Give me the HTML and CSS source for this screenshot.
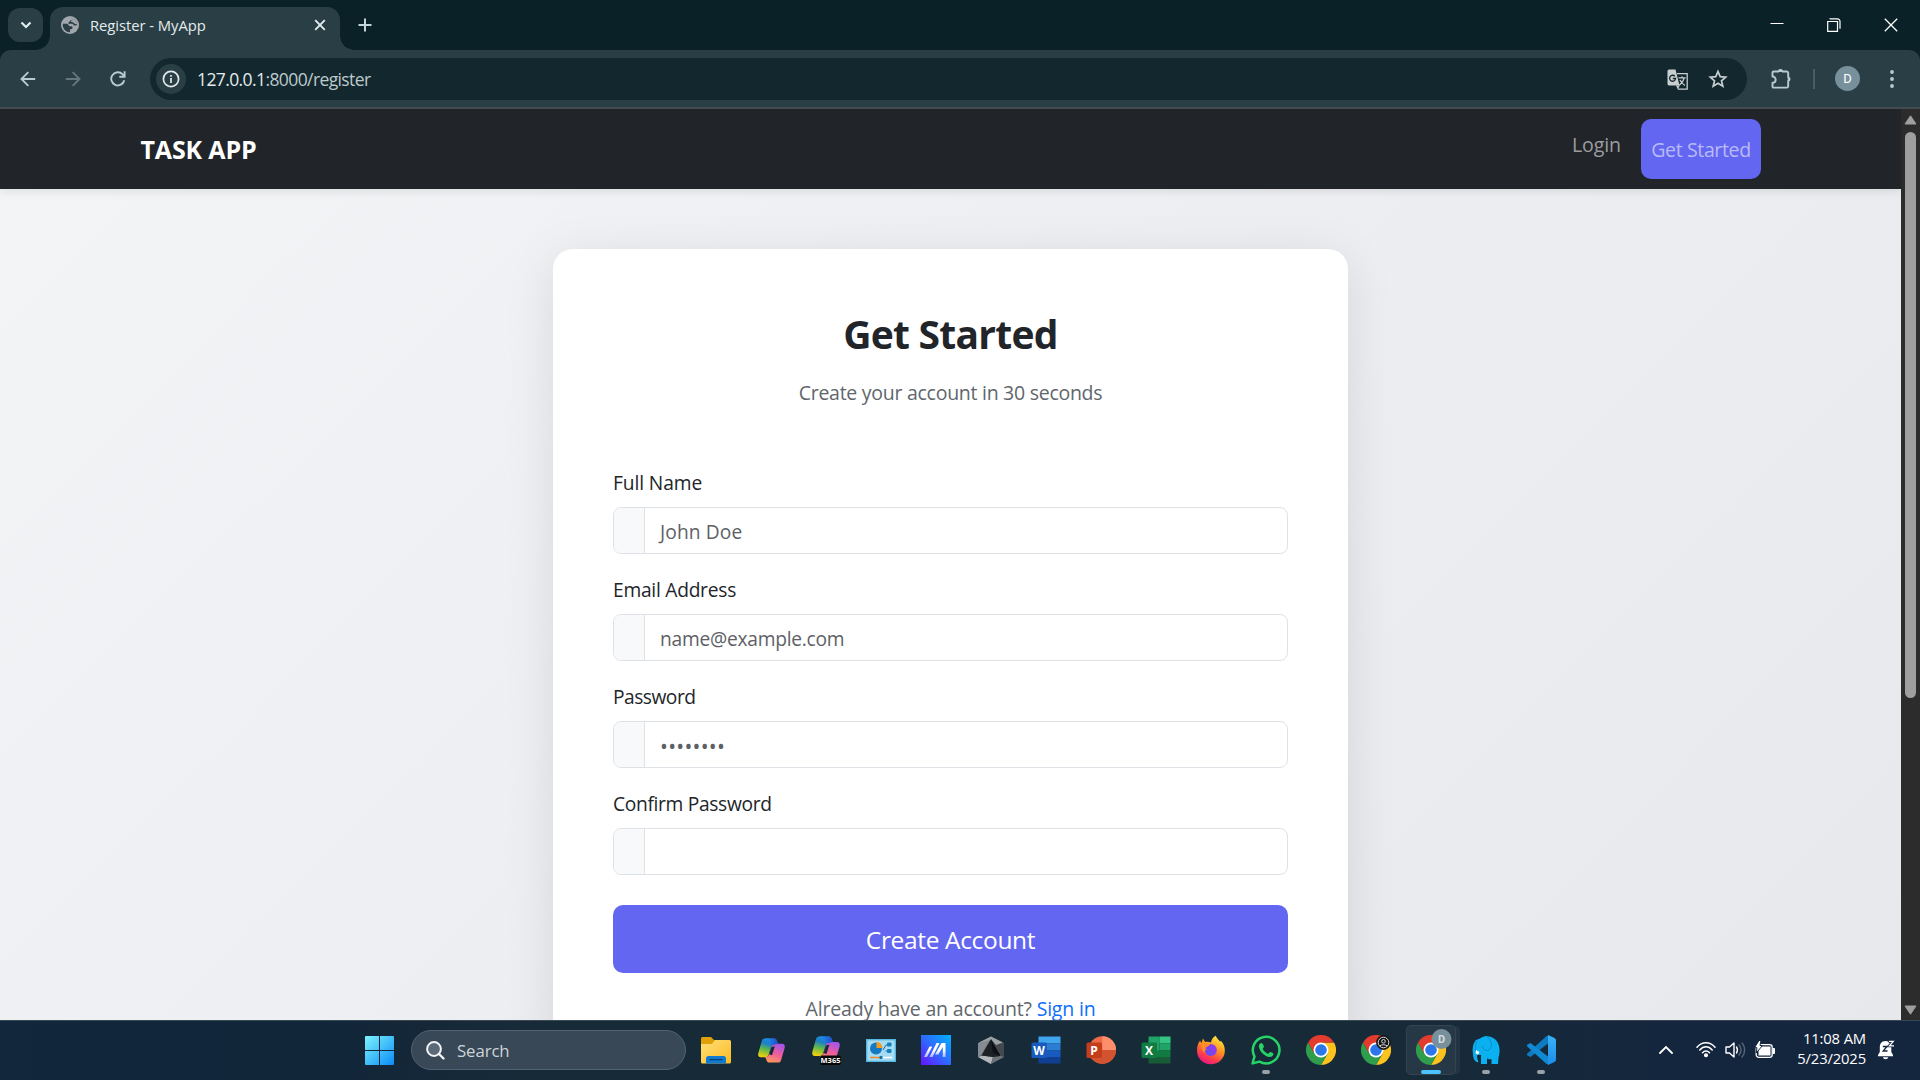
FILE: index.html
```html
<!DOCTYPE html>
<html lang="en">
<head>
<meta charset="utf-8">
<title>Register - MyApp</title>
<link rel="stylesheet" href="styles.css">
</head>
<body>
<svg class="defs" width="0" height="0">
  <defs>
    <linearGradient id="win" x1="0" y1="0" x2="1" y2="1"><stop offset="0" stop-color="#7df3ff"/><stop offset="1" stop-color="#0a8cf5"/></linearGradient>
    <linearGradient id="folder" x1="0" y1="0" x2="1" y2="1"><stop offset="0" stop-color="#ffe07a"/><stop offset="1" stop-color="#fdba22"/></linearGradient>
    <linearGradient id="copA" x1="0.6" y1="0" x2="0.3" y2="1"><stop offset="0" stop-color="#1b8fe8"/><stop offset=".3" stop-color="#1c7fc4"/><stop offset=".6" stop-color="#5fb94c"/><stop offset="1" stop-color="#f2d10e"/></linearGradient>
    <linearGradient id="copB" x1="0.7" y1="0" x2="0.3" y2="1"><stop offset="0" stop-color="#a355ea"/><stop offset=".5" stop-color="#ee5c9c"/><stop offset="1" stop-color="#ff9a5a"/></linearGradient>
    <linearGradient id="copC" x1="0" y1="0" x2="1" y2="0"><stop offset="0" stop-color="#1f9bf0"/><stop offset="1" stop-color="#2247c9"/></linearGradient>
    <linearGradient id="ma" x1="0" y1="1" x2="1" y2="0"><stop offset="0" stop-color="#6a11ff"/><stop offset=".5" stop-color="#2c6bff"/><stop offset="1" stop-color="#00b2ff"/></linearGradient>
    <linearGradient id="maGlyph" x1="0" y1="1" x2="0" y2="0"><stop offset="0" stop-color="#a9b8ff"/><stop offset=".5" stop-color="#fff"/><stop offset="1" stop-color="#fff"/></linearGradient>
    <linearGradient id="fox" x1=".8" y1="0" x2=".3" y2="1"><stop offset="0" stop-color="#fff04a"/><stop offset=".4" stop-color="#ff9a1f"/><stop offset=".75" stop-color="#ff3d4a"/><stop offset="1" stop-color="#e3128d"/></linearGradient>
    <linearGradient id="foxIn" x1="1" y1="0" x2="0" y2="1"><stop offset="0" stop-color="#a431ea"/><stop offset="1" stop-color="#5a52f0"/></linearGradient>
    <linearGradient id="code" x1="0" y1="0" x2="0" y2="1"><stop offset="0" stop-color="#3db1f6"/><stop offset="1" stop-color="#1a8de8"/></linearGradient>
    <symbol id="copilot" viewBox="0 0 30 30">
      <path d="M8 2.500H17.500C19.500 2.500 20.500 4 21 6L22 9H18C16 9 15 10.500 14.500 12L12 19.500C11.500 21 10.500 22 9 22H4C1.500 22 .8 20 1.400 17.500L5 5C5.500 3.500 6.500 2.500 8 2.500Z" fill="url(#copA)"/>
      <path d="M8 2.500H17.500C19.500 2.500 20.500 4 21 6L22 9H18C16.500 9 15.500 10 15 11L13 7C12 4.500 10.500 3.500 8 2.500Z" fill="url(#copC)"/>
      <path d="M22 8H26C28.500 8 29.200 10 28.600 12.500L25 24.500C24.500 26.500 23.500 27.500 22 27.500H13C11 27.500 10 26 9.500 24L8.500 21.800H9C11 21.800 12 20.500 12.500 19L15.500 9.500Z" fill="url(#copB)"/>
      <path d="M15 11.500L18.500 10.500L15.500 20L12.500 19Z" fill="#172a38"/>
    </symbol>
    <symbol id="chrome" viewBox="0 0 48 48">
      <path d="M24 12H44.800A24 24 0 0 1 24 48L34.400 30Z" fill="#fcc31e"/>
      <path d="M3.200 12A24 24 0 0 0 24 48L34.400 30L13.600 30Z" fill="#2f9e4c"/>
      <path d="M3.200 12A24 24 0 0 1 44.800 12H24L13.600 30Z" fill="#e33b2e"/>
      <circle cx="24" cy="24" r="12" fill="#fff"/><circle cx="24" cy="24" r="9.300" fill="#2a76ea"/>
    </symbol>
  </defs>
</svg>

<header class="browser">
  <div class="tabstrip">
    <button class="tab-search" aria-label="Search tabs"><svg width="12" height="8" viewBox="0 0 12 8"><path d="M1.500 1.500L6 6L10.500 1.500" fill="none" stroke="#e3ecee" stroke-width="2.200"/></svg></button>
    <div class="tab">
      <svg class="globe" width="18" height="18" viewBox="0 0 18 18"><circle cx="9" cy="9" r="9" fill="#a2a6ad"/><path d="M1.800 7.800H5.500C7.500 7.800 7.300 9.800 8.500 10.200H10.500C12 10.400 12 13 10.300 13.300H9V16.200A7.300 7.300 0 0 1 1.800 7.800Z M8.500 1.800A7.300 7.300 0 0 1 12 2.400C12 4.200 11 4.600 9.500 4.600C8.500 5 8.800 6.200 7.500 6.500V8C10 8 12 7.300 12.600 9.200C13.200 10 14.500 9.500 16.200 9A7.300 7.300 0 0 0 8.500 1.800Z" fill="#2a3f45"/><path d="M11.500 2.300A7.300 7.300 0 0 1 16 8C14.500 8.700 13.800 8.300 13.300 7.300C12.500 6 10.500 6.500 9.800 6C10 5 12.500 5 11.500 2.300Z" fill="#a2a6ad"/></svg>
      <span class="tab-title">Register - MyApp</span>
      <svg class="tab-close" width="12" height="12" viewBox="0 0 12 12"><path d="M1.200 1.200L10.800 10.800M10.800 1.200L1.200 10.800" stroke="#e3ecee" stroke-width="1.900"/></svg>
    </div>
    <svg class="new-tab" width="14" height="14" viewBox="0 0 14 14"><path d="M7 .5V13.500M.5 7H13.500" stroke="#c3d5da" stroke-width="2"/></svg>
    <div class="window-controls">
      <svg width="14" height="14" viewBox="0 0 14 14"><path d="M.5 5.500H13.500" stroke="#fff" stroke-width="1"/></svg>
      <svg width="14" height="14" viewBox="0 0 14 14" fill="none" stroke="#fff"><path d="M.7 3.500H10.500V13.300H.7Z" stroke-width="1.200"/><path d="M3 1.200V.9H10.500A2.500 2.500 0 0 1 13 3.400V10.800" stroke-width="1.200"/></svg>
      <svg width="14" height="14" viewBox="0 0 14 14"><path d="M.8 .8L13.200 13.200M13.200 .8L.8 13.200" stroke="#fff" stroke-width="1.300"/></svg>
    </div>
  </div>
  <div class="toolbar">
    <svg width="16" height="16" viewBox="0 0 16 16" fill="none" stroke="#b7ccd2" stroke-width="1.900"><path d="M15.200 8H1.800M8.300 1.200L1.500 8L8.300 14.800"/></svg>
    <svg width="16" height="16" viewBox="0 0 16 16" fill="none" stroke="#64777d" stroke-width="1.900"><path d="M.8 8H14.200M7.700 1.200L14.500 8L7.700 14.800"/></svg>
    <svg width="16" height="16" viewBox="0 0 16 16" fill="none" stroke="#b7ccd2" stroke-width="1.900"><path d="M14.300 9.300A6.600 6.600 0 1 1 12.700 3.300L14.500 5.100M14.600 .3V5.700H9.300"/></svg>
    <div class="omnibox">
      <span class="site-info"><svg width="18" height="18" viewBox="0 0 18 18"><circle cx="9" cy="9" r="7.600" fill="none" stroke="#e3e9ea" stroke-width="1.700"/><path d="M9 8V13M9 5V6.700" stroke="#e3e9ea" stroke-width="1.700"/></svg></span>
      <span class="url"><b>127.0.0.1</b>:8000/register</span>
      <svg class="translate" width="22" height="22" viewBox="0 0 22 22"><path d="M10 4.700H20.200V20.200H11" fill="none" stroke="#c9ced0" stroke-width="1.300"/><path d="M2 .5H8.500L12.500 16.500H2A1.600 1.600 0 0 1 .5 15V2A1.600 1.600 0 0 1 2 .5Z" fill="#c9ced0"/><path d="M9 16.500H12.800L10.800 20.500Z" fill="#c9ced0"/><path d="M7.900 7.300A3 3 0 1 0 8.600 9.500H5.800" fill="none" stroke="#14282e" stroke-width="1.300"/><path d="M11.500 8.900H18.700M15 7.200V8.900M17.200 9C16.500 12 14.500 14.500 12.300 16.200M13 11C14 13.300 16 15.300 18 16.500" fill="none" stroke="#c9ced0" stroke-width="1.200"/></svg>
      <svg class="star" width="20" height="20" viewBox="0 0 20 20"><path d="M10 2.500L12.200 7.600L17.700 8.100L13.500 11.800L14.800 17.200L10 14.300L5.200 17.200L6.500 11.800L2.300 8.100L7.800 7.600Z" fill="none" stroke="#c9ced0" stroke-width="1.700"/></svg>
    </div>
    <svg class="puzzle" width="22" height="22" viewBox="0 0 22 22"><path d="M2.700 3.500H7.500A2 2 0 0 1 11.400 3.500H15.500A1.500 1.500 0 0 1 17.200 5V9A2.300 2.300 0 0 1 17.200 13.200V18A1.500 1.500 0 0 1 15.700 19.600H2.500A1 1 0 0 1 1.500 18.600V14.800A3 3 0 0 0 1.500 8.500V4.500A1 1 0 0 1 2.700 3.500Z" fill="none" stroke="#b7ccd2" stroke-width="1.900" stroke-linejoin="round"/><path d="M7.500 3.500A2 2 0 0 1 11.400 3.500ZM17.200 9A2.300 2.300 0 0 1 17.200 13.200Z" fill="#b7ccd2" stroke="#b7ccd2"/></svg>
    <span class="divider"></span>
    <span class="profile">D</span>
    <svg class="dots" width="4" height="18" viewBox="0 0 4 18" fill="#b7ccd2"><circle cx="2" cy="2" r="1.900"/><circle cx="2" cy="9" r="1.900"/><circle cx="2" cy="16" r="1.900"/></svg>
  </div>
</header>

<div class="viewport">
  <div class="page">
    <nav class="navbar">
      <a class="brand">TASK APP</a>
      <a class="nav-link">Login</a>
      <a class="nav-link nav-cta">Get Started</a>
    </nav>
    <main class="content">
      <section class="card">
        <h2>Get Started</h2>
        <p class="lead">Create your account in 30 seconds</p>
        <form>
          <label class="name">Full Name</label>
          <div class="field"><span class="addon"></span><span class="control john">John Doe</span></div>
          <label>Email Address</label>
          <div class="field"><span class="addon"></span><span class="control">name@example.com</span></div>
          <label class="pass">Password</label>
          <div class="field"><span class="addon"></span><span class="control secret">••••••••</span></div>
          <label class="confirm">Confirm Password</label>
          <div class="field"><span class="addon"></span><span class="control"></span></div>
          <button type="button" class="submit">Create Account</button>
        </form>
        <p class="signin">Already have an account? <a>Sign in</a></p>
      </section>
    </main>
  </div>
  <div class="scrollbar">
    <svg width="13" height="10" viewBox="0 0 13 10"><path d="M6.500 .8L12 9H1Z" fill="#9f9f9f" stroke="#9f9f9f" stroke-linejoin="round"/></svg>
    <span class="thumb"></span>
    <svg width="13" height="10" viewBox="0 0 13 10"><path d="M6.500 9.200L12 1H1Z" fill="#9f9f9f" stroke="#9f9f9f" stroke-linejoin="round"/></svg>
  </div>
</div>

<footer class="taskbar">
  <svg class="start" width="29" height="29" viewBox="0 0 29 29"><path d="M0 1A1 1 0 0 1 1 0H14V14H0ZM15 0H28A1 1 0 0 1 29 1V14H15ZM0 15H14V29H1A1 1 0 0 1 0 28ZM15 15H29V28A1 1 0 0 1 28 29H15Z" fill="url(#win)"/></svg>
  <div class="search"><svg width="19" height="19" viewBox="0 0 19 19"><circle cx="8" cy="8" r="6.900" fill="#5b6a78" stroke="#f2f4f5" stroke-width="2"/><path d="M13 13L17.500 17.500" stroke="#f2f4f5" stroke-width="2.400" stroke-linecap="round"/></svg><span>Search</span></div>
  <div class="apps">
    <span class="app"><svg width="30" height="30" viewBox="0 0 30 30"><path d="M0 3.500A1.500 1.500 0 0 1 1.500 2H10L13 5H28.500V12H0Z" fill="#e0a008"/><path d="M0 9H11L14 5H28.500A1.500 1.500 0 0 1 30 6.500V27A1.500 1.500 0 0 1 28.500 28.500H1.500A1.500 1.500 0 0 1 0 27Z" fill="url(#folder)"/><path d="M5 28.500V23.500A2.500 2.500 0 0 1 7.500 21H22.500A2.500 2.500 0 0 1 25 23.500V28.500Z" fill="#0f7ad0"/><path d="M9 24.600H21" stroke="#0a3f78" stroke-width="1.400" stroke-linecap="round"/></svg></span>
    <span class="app"><svg width="29" height="29"><use href="#copilot"/></svg></span>
    <span class="app"><svg width="30" height="30" viewBox="0 0 30 30"><use href="#copilot" width="30" height="30" y="-1"/><rect x="9" y="20.500" width="21" height="9.500" rx="2" fill="#080808"/><text x="19.500" y="28" text-anchor="middle" class="m365">M365</text></svg></span>
    <span class="app"><svg width="30" height="30" viewBox="0 0 30 30"><rect x=".7" y="4.700" width="28.600" height="21.600" fill="#a5dcf4" stroke="#53b8e2" stroke-width="1.400"/><circle cx="10" cy="13.500" r="6" fill="#1479c0"/><path d="M10.500 13V6.800A6.300 6.300 0 0 1 16.500 13Z" fill="#f59b23"/><path d="M17 15L20 10M20 10H22M19.500 16H22" stroke="#1d70a5" fill="none"/><rect x="21" y="7.500" width="4.500" height="4" rx="1" fill="#1580bb"/><rect x="21" y="14" width="4.500" height="4" rx="1" fill="#1580bb"/><path d="M4 22.500H15" stroke="#ee8f2a" stroke-width="1.500"/><path d="M15 22.500H26" stroke="#f9ffff" stroke-width="1.500"/><circle cx="15" cy="22.500" r="1.700" fill="#1673a5"/></svg></span>
    <span class="app"><svg width="30" height="30" viewBox="0 0 30 30"><rect width="30" height="30" fill="url(#ma)"/><path d="M3 22L8.500 11.500H11.300L6 22ZM8.500 22L15.500 8H18.500L11.500 22ZM14 19.500L20.500 8H24.500V22H21.800V12L17.300 19.500Z" fill="url(#maGlyph)"/></svg></span>
    <span class="app"><svg width="30" height="30" viewBox="0 0 30 30"><path d="M15 1.500L28 8V22L15 29L2 22V8Z" fill="#43494f"/><path d="M15 1.500L27 7.500L20 10L15 4L10 10L3 7.500Z" fill="#9da2a7"/><path d="M2 8L14 5L5.500 20L2 22Z" fill="#868b91"/><path d="M2 22L6 20.500L17 22L15 29Z" fill="#b3b7bb"/><path d="M17 22L24 20.500L28 22L15 29Z" fill="#6c7278"/><path d="M15 4.500L24.500 21L17 22L5.500 20.500Z" fill="#1d2025"/><path d="M15 4.500L24.500 21L17 18Z" fill="#0d1014"/></svg></span>
    <span class="app"><svg width="30" height="30" viewBox="0 0 30 30"><path d="M7.500 1.500H29.500V8.500H7.500Z" fill="#41a5ee"/><path d="M7.500 8.500H29.500V15.500H7.500Z" fill="#2b7cd3"/><path d="M7.500 15.500H29.500V22H7.500Z" fill="#185abd"/><path d="M7.500 22H29.500V28.500H7.500Z" fill="#103f91"/><rect x=".5" y="7.500" width="15.500" height="15.500" rx="1.500" fill="#185abd"/><text x="8" y="19.500" text-anchor="middle" class="office">W</text></svg></span>
    <span class="app"><svg width="30" height="30" viewBox="0 0 30 30"><circle cx="16.300" cy="15" r="13.700" fill="#ed6c47"/><path d="M16.300 1.300A13.700 13.700 0 0 1 30 15H16.300Z" fill="#ff8f6b"/><path d="M2.600 15H30A13.700 13.700 0 0 1 2.600 15Z" fill="#d35230"/><rect x=".5" y="7.500" width="15.500" height="15.500" rx="1.500" fill="#c43e1c"/><text x="8" y="19.500" text-anchor="middle" class="office">P</text></svg></span>
    <span class="app"><svg width="30" height="30" viewBox="0 0 30 30"><path d="M7.500 1.500H18.500V22H7.500Z" fill="#21a366"/><path d="M18.500 1.500H29.500V8.500H18.500Z" fill="#33c481"/><path d="M18.500 8.500H29.500V15.500H18.500Z" fill="#21a366"/><path d="M7.500 15.500H29.500V22H7.500Z" fill="#107c41"/><path d="M7.500 22H29.500V28.500H7.500Z" fill="#185c37"/><rect x=".5" y="7.500" width="15.500" height="15.500" rx="1.500" fill="#107c41"/><text x="8" y="19.500" text-anchor="middle" class="office">X</text></svg></span>
    <span class="app"><svg width="30" height="30" viewBox="0 0 30 30"><path d="M19.500 .8C21 3 22 4.500 24 6.500L25 6C27.500 8.500 29 12 28.800 16A13.900 13.600 0 0 1 1 15.500C1 11.500 2 8 4 5.800L5.500 8L7 3.500L9 7C11 6.500 13.500 6.800 15 7.500C15.500 4.500 17 2 19.500 .8Z" fill="url(#fox)"/><circle cx="14.800" cy="15" r="6" fill="url(#foxIn)"/><path d="M5.500 9C8.500 7.500 12 8 14 9.500C12.500 11.500 10.500 11.500 9.500 12.500C9 13.500 10 14.500 11 14.500C9 15 8 16 8.500 18C6 15.500 5 12 5.500 9Z" fill="#ff8d25"/></svg></span>
    <span class="app running"><svg width="30" height="30" viewBox="0 0 30 30"><path d="M1.600 28.400L3.500 21.500A13.300 13.300 0 1 1 8.500 26.600Z" fill="none" stroke="#25d366" stroke-width="2.500" stroke-linejoin="round"/><path d="M10.500 8C9.500 7.700 7.800 9.500 7.900 11.500C8.300 16.500 14 21.700 18.500 22C20.500 22 22.500 20.500 22.500 18.700C22 17.800 20 16.900 19.200 16.900C18.300 17.200 17.800 18.700 17 18.700C15 18.200 12.500 15.800 11.800 14C11.800 13.200 13 12.500 13 11.800C12.700 10.500 11.700 8.200 10.500 8Z" fill="#25d366"/></svg></span>
    <span class="app"><svg width="30" height="30"><use href="#chrome"/></svg></span>
    <span class="app"><svg width="30" height="30"><use href="#chrome" width="30" height="30"/><g fill="none" stroke="#ddd"><circle cx="22.500" cy="7.500" r="6.900" fill="#151515" stroke="#151515"/><circle cx="22.500" cy="7.500" r="5.300"/><circle cx="22.500" cy="6.300" r="1.800"/><path d="M18.800 11C20.500 9.300 24.500 9.300 26.200 11"/></g></svg></span>
    <span class="app active"><svg width="36" height="36" viewBox="0 0 36 36"><use href="#chrome" width="30" height="30" y="6"/><circle cx="25.500" cy="10" r="10" fill="#78909c"/><text x="25.500" y="14" text-anchor="middle" class="badge">D</text></svg></span>
    <span class="app running"><svg width="30" height="30" viewBox="0 0 30 30"><path d="M9 3.500C12 1.500 15 0 18 1.500C24 2.500 28 7 28.500 14C28.800 18 28 21 27.500 22.500L27 29H20.500V24C18.500 25 17.500 24 16 23.500V29H10V20C8 20 7 19.500 6.500 18.500C5.800 21 6 24 7.500 27C4 28 2 23 2 19C1 14 2 8 5 5Z" fill="#0ab0ef"/><path d="M16 2C21 5 22 12 18 15C14 17 12 13 11 11M6 6C4 10 4 14 5 17" fill="none" stroke="#0788c4" stroke-width=".8"/><path d="M5 15L8.500 17L7 20L4.500 18Z" fill="#f4fbff"/></svg></span>
    <span class="app running"><svg width="30" height="30" viewBox="0 0 30 30"><path d="M22 .5V8.500L4.500 22L1.500 20.500C.8 19.800 .8 19 1.500 18.300L20 1.500Z" fill="#0e7abf"/><path d="M1.500 9.500L4.500 8L22 21.500V29.500L20 28.500L1.500 11.700C.8 11 .8 10.200 1.500 9.500Z" fill="#1089d3"/><path d="M22 0L28.500 3Q30 3.800 30 5V25Q30 26.200 28.500 27L22 30Z" fill="url(#code)"/></svg></span>
  </div>
  <div class="tray">
    <svg class="chev" width="14" height="9" viewBox="0 0 14 9"><path d="M1 8L7 2L13 8" fill="none" stroke="#fff" stroke-width="1.800" stroke-linecap="round"/></svg>
    <svg class="wifi" width="20" height="17" viewBox="0 0 20 17" fill="none" stroke="#fff" stroke-width="1.500" stroke-linecap="round"><path d="M1 6.200C6 .3 14 .3 19 6.200M3.800 9C7.500 4.800 12.500 4.800 16.200 9M6.500 11.800C8.700 9.500 11.300 9.500 13.500 11.800"/><circle cx="10" cy="14.200" r="1.300" fill="#fff"/></svg>
    <svg class="sound" width="21" height="18" viewBox="0 0 21 18" fill="none" stroke="#fff" stroke-width="1.400" stroke-linejoin="round" stroke-linecap="round"><path d="M1 6H4.500L9 2V16L4.500 12H1ZM11.500 6C12.800 8 12.800 10 11.500 12"/><path d="M14 4C16.500 7 16.500 11 14 14M17 2C20.500 6 20.500 12 17 16" stroke="#566477"/></svg>
    <svg class="battery" width="21" height="18" viewBox="0 0 21 18"><rect x="1.200" y="3.700" width="16" height="12.600" rx="2.500" fill="none" stroke="#fff" stroke-width="1.300"/><path d="M18 7.500H19.500V12.500H18Z" fill="#fff" stroke="#fff"/><path d="M4 5.500H15.500V14.500H3.500V10Z" fill="#fff"/><path d="M4 -.5L-.5 6.700H2L1.200 12L7.500 4.500H5L6 -.5Z" fill="#fff" stroke="#15273d" stroke-width="1"/></svg>
    <div class="clock"><span>11:08 AM</span><span>5/23/2025</span></div>
    <svg class="bell" width="18" height="20" viewBox="0 0 18 20"><path d="M8.500 1C4.500 1 2.800 4 2.800 7V12L1 15V16.300H16V15L14.300 12V7C14.300 4 12.500 1 8.500 1ZM5.800 17.300A2.800 2.300 0 0 0 11.300 17.300Z" fill="#fff"/><path d="M11.500 1.300H16.200L12.500 5.800H17" fill="none" stroke="#15273d" stroke-width="3"/><path d="M12 1.300H16.200L12.500 5.800H17" fill="none" stroke="#fff" stroke-width="1.300"/><path d="M5.800 6.500H9.800L6.300 11H10.500" fill="none" stroke="#15273d" stroke-width="1.400"/></svg>
  </div>
</footer>
</body>
</html>
```
FILE: styles.css
```css
* { box-sizing: border-box; }
body {
  margin: 0;
  width: 1920px;
  height: 1080px;
  overflow: hidden;
  display: flex;
  flex-direction: column;
  font-family: "Open Sans", "Noto Sans", sans-serif;
  color: #212529;
}
svg { display: block; flex: none; }
.defs { position: absolute; }
button { font: inherit; border: 0; padding: 0; }

/* Browser frame */
.browser { height: 109px; flex: none; background: #0a2227; }
.tabstrip { height: 50px; display: flex; align-items: center; padding-left: 8px; }
.tab-search {
  width: 35px; height: 34px; border-radius: 12px;
  background: #2a3f45;
  display: flex; align-items: center; justify-content: center;
}
.tab {
  position: relative;
  align-self: flex-end;
  width: 290px; height: 43px;
  margin-left: 7px;
  padding: 0 14px 7px 11px;
  background: #2a3f45;
  border-radius: 13px 13px 0 0;
  display: flex; align-items: center;
}
.tab::before, .tab::after {
  content: "";
  position: absolute;
  bottom: 0;
  width: 14px; height: 14px;
}
.tab::before { left: -14px; background: radial-gradient(circle at 0 0, transparent 13.500px, #2a3f45 14px); }
.tab::after { right: -14px; background: radial-gradient(circle at 100% 0, transparent 13.500px, #2a3f45 14px); }
.tab-title { margin-left: 11px; font-size: 14.800px; letter-spacing: -0.050px; color: #e3ecee; white-space: nowrap; }
.tab-close { margin-left: auto; }
.new-tab { margin-left: 18px; }
.window-controls { margin-left: auto; margin-right: 22px; display: flex; gap: 43px; }
.toolbar {
  height: 59px;
  background: #2a3f45;
  border-bottom: 2px solid #434b4f;
  border-radius: 11px 11px 0 0;
  display: flex; align-items: center;
  padding: 0 26px 0 20px;
}
.toolbar > svg + svg:not(.dots) { margin-left: 29px; }
.omnibox {
  width: 1597px; height: 42px;
  margin-left: 24px;
  margin-top: 1px;
  padding: 0 19px 0 6px;
  border-radius: 21px;
  background: #12282e;
  display: flex; align-items: center;
}
.site-info {
  width: 30px; height: 30px; border-radius: 50%;
  background: #2a3f45;
  display: flex; align-items: center; justify-content: center;
}
.url { margin-left: 11px; font-size: 17.500px; letter-spacing: -0.600px; color: #bfc9cc; }
.url b { font-weight: 400; color: #e6ebec; }
.translate { margin-left: auto; margin-top: 1px; }
.star { margin-left: 19px; }
.puzzle { margin-left: 24px; }
.divider { width: 2px; height: 20px; margin-left: 20px; background: #475e65; }
.profile {
  width: 25px; height: 25px; margin-left: 20px; border-radius: 50%;
  background: #78909c; color: #fff;
  font: 13px/25px Roboto, sans-serif; text-align: center;
}
.dots { margin-left: auto; }

/* Web page */
.viewport { height: 911px; flex: none; display: flex; overflow: hidden; }
.page {
  width: 1901px; height: 1240px;
  background: linear-gradient(135deg, #f3f4f6 0%, #e5e7eb 100%);
  font-size: 19.200px;
  letter-spacing: -0.250px;
}
.navbar {
  position: relative;
  height: 80px;
  padding: 10px 140px 10px 140.500px;
  background: #212429;
  box-shadow: 0 3px 8px rgba(0, 0, 0, 0.08);
  display: flex;
}
.brand { margin-right: auto; line-height: 61px; font-size: 25px; font-weight: 700; color: #fff; letter-spacing: -0.150px; }
.nav-link { line-height: 30px; padding: 11px 10px; color: #9b9d9f; font-size: 19.600px; letter-spacing: -0.100px; }
.nav-cta {
  width: 120px; height: 60px;
  margin-left: 10px;
  padding: 16px 0;
  text-align: center;
  border-radius: 10px;
  background: #6366f1;
  color: #b9baf8;
  letter-spacing: -0.400px;
}
.content { display: flex; justify-content: center; padding-top: 60px; }
.card {
  width: 795px; height: 900px;
  padding: 60px;
  background: #fff;
  border-radius: 20px;
  box-shadow: 0 10px 50px rgba(0, 0, 0, 0.1);
}
.card h2 { margin: 0; font-size: 39px; line-height: 50px; font-weight: 700; text-align: center; letter-spacing: -0.750px; }
.card p { margin: 0; text-align: center; line-height: 30px; color: #60666b; }
.card .lead { margin-top: 19px; margin-bottom: 60px; font-size: 19.500px; letter-spacing: -0.270px; }
.card label { display: block; height: 30px; line-height: 30px; margin-bottom: 9px; }
.card .name { letter-spacing: -0.100px; }
.card .john { letter-spacing: 0.120px; }
.card .pass { letter-spacing: -0.500px; }
.card .confirm { letter-spacing: -0.320px; }
.field {
  display: flex;
  height: 47px;
  margin-bottom: 21px;
  border: 1px solid #dee2e6;
  border-radius: 8px;
  overflow: hidden;
}
.addon { width: 31px; background: #f8f9fa; border-right: 1px solid #dee2e6; }
.control { padding-left: 15px; line-height: 47px; color: #5d6166; }
.field .secret { font-size: 21px; line-height: 48px; letter-spacing: 0.250px; }
.submit {
  width: 100%; height: 68px;
  margin-top: 9px;
  padding-top: 1px;
  border-radius: 10px;
  background: #6366f1; color: #fff;
  font-size: 24.500px; line-height: 67px; letter-spacing: -0.350px;
}
.card .signin { margin-top: 21px; font-size: 19.500px; letter-spacing: -0.190px; }
.signin a { color: #0d6efd; }
.scrollbar {
  width: 19px; background: #2c2c2c;
  display: flex; flex-direction: column; align-items: center;
  padding: 6px 0 5px;
}
.thumb { width: 11px; height: 566px; margin-top: 7px; margin-bottom: auto; border-radius: 6px; background: #9f9f9f; }

/* Taskbar */
.taskbar {
  height: 60px; flex: none;
  padding-left: 365px;
  border-top: 1px solid #3a4853;
  background: linear-gradient(90deg, #12263c 0%, #12263a 17%, #172a38 27%, #172a38 75%, #14263e 88%, #14263e 100%);
  display: flex; align-items: center;
}
.start { margin-bottom: 1px; }
.search {
  width: 275px; height: 40px;
  margin-left: 17px;
  margin-bottom: 1px;
  padding-left: 14px;
  border: 1px solid #526270;
  border-radius: 20px;
  background: #384857;
  display: flex; align-items: center; gap: 12px;
  font-size: 16.800px; letter-spacing: -0.100px; color: #cfd4d8;
}
.apps { display: flex; margin-left: 5px; margin-bottom: 1px; gap: 5px; }
.app {
  position: relative;
  width: 50px; height: 50px;
  display: flex; align-items: center; justify-content: center;
}
.running::after, .active::after {
  content: "";
  position: absolute;
  bottom: 1px;
  width: 8px; height: 4px; border-radius: 2px;
  background: #99a1a8;
}
.active { background: #263846; border: 1px solid #344550; border-radius: 5px; box-shadow: 5px 0 0 -1px #223543; }
.active::after { bottom: 0; width: 20px; background: #4cc2ff; }
.active svg { margin: -6px -6px 0 0; }
.m365 { font: 700 7.500px "Open Sans", sans-serif; fill: #fff; }
.office { font: 700 12px "Open Sans", sans-serif; fill: #fff; }
.badge { font: 700 11px Roboto, sans-serif; fill: #d5dce0; }
.tray { margin-left: auto; padding: 0 25px 2px 0; display: flex; align-items: center; color: #fff; }
.wifi { margin-left: 23px; }
.sound { margin-left: 9px; }
.battery { margin-left: 9px; }
.clock {
  width: 80px; margin-left: 10px;
  padding-bottom: 3px;
  display: flex; flex-direction: column; align-items: flex-end;
  font-size: 14.800px; line-height: 20px; letter-spacing: -0.150px;
}
.bell { margin-left: 11px; }
```
